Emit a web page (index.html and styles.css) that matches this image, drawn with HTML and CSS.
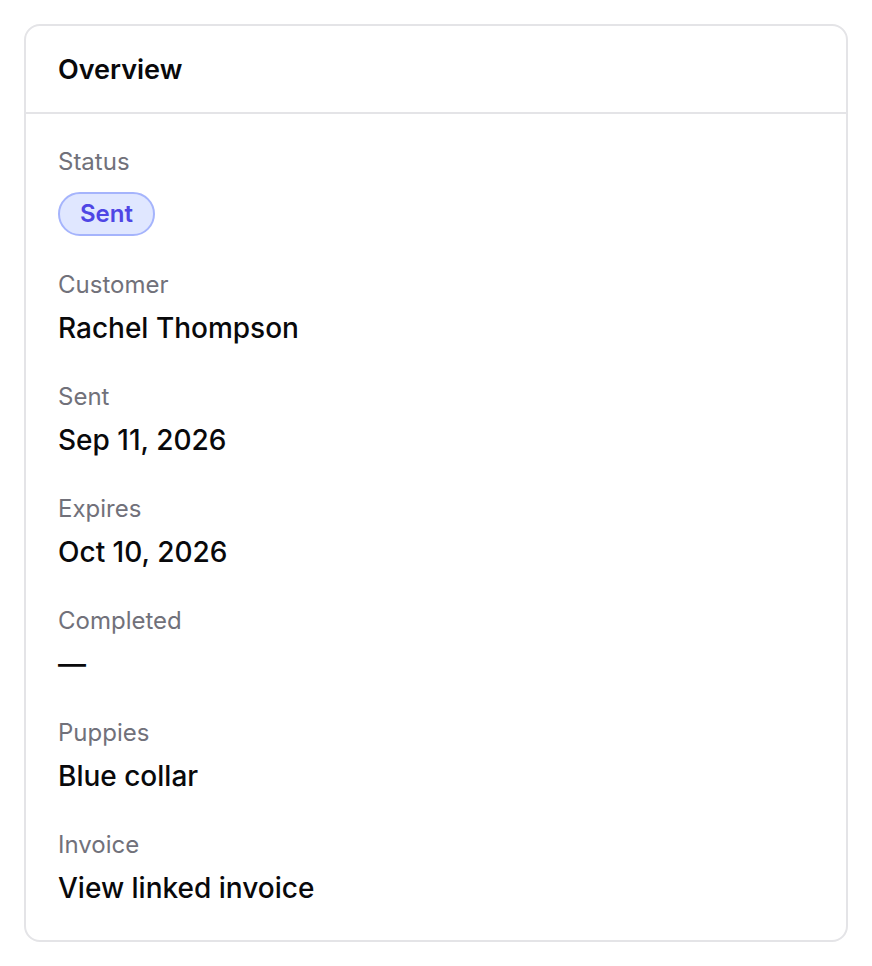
FILE: index.html
```html
<!DOCTYPE html>
<html lang="en">
<head>
    <meta charset="UTF-8">
    <meta name="viewport" content="width=device-width, initial-scale=1.0">
    <title>Overview</title>
    <link rel="stylesheet" href="styles.css">
</head>
<body>
    <div class="card">
        <div class="card-header">
            <h2>Overview</h2>
        </div>

        <dl class="details">
            <div class="detail">
                <dt>Status</dt>
                <dd class="status-value"><span class="badge">Sent</span></dd>
            </div>
            <div class="detail">
                <dt>Customer</dt>
                <dd>Rachel Thompson</dd>
            </div>
            <div class="detail">
                <dt>Sent</dt>
                <dd>Sep 11, 2026</dd>
            </div>
            <div class="detail">
                <dt>Expires</dt>
                <dd>Oct 10, 2026</dd>
            </div>
            <div class="detail">
                <dt>Completed</dt>
                <dd>—</dd>
            </div>
            <div class="detail">
                <dt>Puppies</dt>
                <dd>Blue collar</dd>
            </div>
            <div class="detail">
                <dt>Invoice</dt>
                <dd><a href="#" class="link">View linked invoice</a></dd>
            </div>
        </dl>
    </div>
</body>
</html>
```

FILE: styles.css
```css
* {
    margin: 0;
    padding: 0;
    box-sizing: border-box;
}

body {
    font-family: Inter, "Noto Sans", sans-serif;
    background: #ffffff;
    color: #09090b;
    padding: 24px;
}

.card {
    background: white;
    border: 2px solid #e4e4e7;
    border-radius: 16px;
}

.card-header {
    padding: 24px 32px 22px;
    border-bottom: 2px solid #e4e4e7;
}

.card-header h2 {
    font-size: 27px;
    line-height: 40px;
    font-weight: 600;
    color: #09090b;
}

.details {
    display: flex;
    flex-direction: column;
    gap: 31px;
    padding: 32px 32px 30px;
}

.detail dt {
    font-size: 24px;
    line-height: 32px;
    color: #71717a;
    margin-bottom: 5px;
}

.detail dd {
    font-size: 28px;
    line-height: 44px;
    font-weight: 500;
    color: #09090b;
}

.status-value {
    display: flex;
    padding: 9px 0 2px;
}

.badge {
    display: inline-flex;
    align-items: center;
    height: 44px;
    padding: 0 20px;
    border: 2px solid #a5b4fc;
    border-radius: 999px;
    background: #e0e7ff;
    color: #4f46e5;
    font-size: 24px;
    line-height: 32px;
    font-weight: 600;
}

.link {
    color: inherit;
    text-decoration: none;
}
```
